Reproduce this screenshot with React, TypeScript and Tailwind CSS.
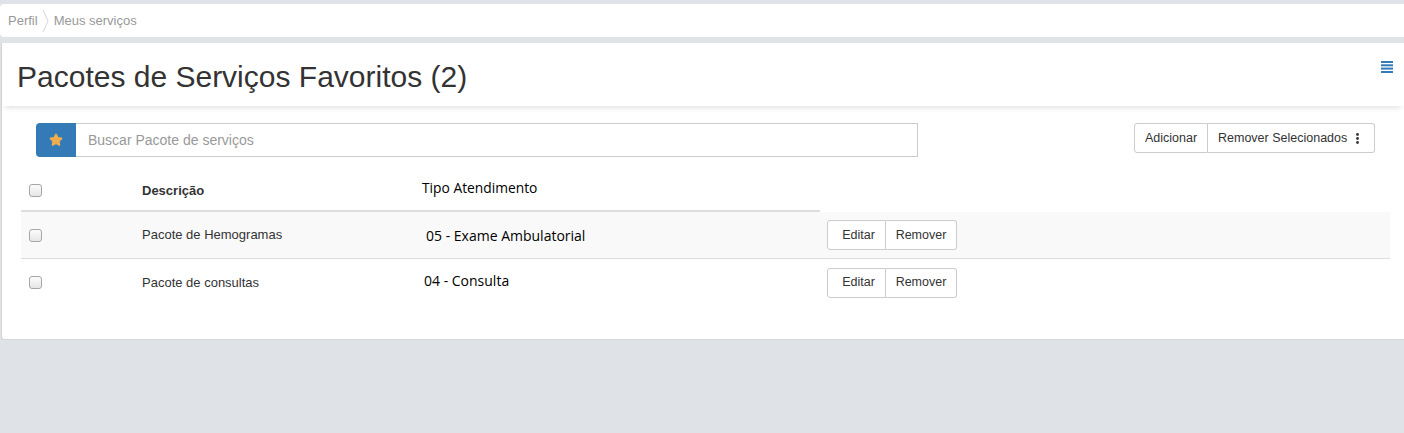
import { Star } from 'lucide-react';

const rows = [
  { id: 1, desc: 'Pacote de Hemogramas', tipo: '05 - Exame Ambulatorial', striped: true, tipoOffset: 'pl-[4px]' },
  { id: 2, desc: 'Pacote de consultas', tipo: '04 - Consulta', striped: false, tipoOffset: 'pl-[2px] -mt-[4px]' },
];

const Checkbox = () => (
  <span className="inline-block w-[13px] h-[13px] rounded-[3px] border border-[#a6a6a6] bg-gradient-to-b from-[#fcfcfc] to-[#e6e6e6]" />
);

const App = () => {
  return (
    <div className="w-[1404px] h-[433px] bg-[#dfe3e7] font-['Liberation_Sans',Arial,sans-serif] text-[#333] overflow-hidden">
      <div className="pt-[4px]">
        {/* breadcrumb */}
        <div className="h-[33px] bg-white rounded-l-[4px] flex items-center pl-[8px] text-[13px] text-[#999]">
          <span>Perfil</span>
          <svg width="10" height="24" viewBox="0 0 10 24" className="mx-[3px]">
            <path d="M2 1 L7 12 L2 23" fill="none" stroke="#d6d6d6" strokeWidth="1" />
          </svg>
          <span>Meus serviços</span>
        </div>

        {/* main panel */}
        <div className="mt-[6px] ml-[1px] h-[297px] bg-white border-l border-b border-[#d2d6da] rounded-bl-[3px]">
          <div className="h-[63px] flex items-start justify-between shadow-[0_4px_6px_-3px_rgba(0,0,0,0.15)] relative">
            <h1 className="text-[30px] leading-none pl-[15px] pt-[19px] text-[#333]">Pacotes de Serviços Favoritos (2)</h1>
            <svg width="12" height="12" viewBox="0 0 12 12" className="mt-[18px] mr-[11px]">
              <rect x="0" y="0" width="12" height="2" fill="#337ab7" />
              <rect x="0" y="3.3" width="12" height="2" fill="#337ab7" />
              <rect x="0" y="6.6" width="12" height="2" fill="#337ab7" />
              <rect x="0" y="10" width="12" height="2" fill="#337ab7" />
            </svg>
          </div>

          <div className="flex justify-between pt-[17px] pl-[34px] pr-[29px]">
            <div className="flex w-[882px] h-[34px]">
              <div className="w-[40px] bg-[#337ab7] rounded-l-[4px] flex items-center justify-center">
                <Star size={14} fill="#f0ad4e" stroke="#f0ad4e" />
              </div>
              <div className="flex-1 border border-l-0 border-[#ccc] flex items-center pl-[12px] text-[14px] text-[#999]">
                Buscar Pacote de serviços
              </div>
            </div>
            <div className="flex h-[30px] text-[12.5px] text-[#333]">
              <button className="w-[74px] border border-[#ccc] rounded-l-[3px] bg-white">Adicionar</button>
              <button className="w-[167px] pl-[10px] border border-l-0 border-[#ccc] rounded-r-[3px] bg-white flex items-center gap-[9px]">
                Remover Selecionados
                <svg width="3" height="11" viewBox="0 0 3 11">
                  <circle cx="1.5" cy="1.5" r="1.4" fill="#333" />
                  <circle cx="1.5" cy="5.5" r="1.4" fill="#333" />
                  <circle cx="1.5" cy="9.5" r="1.4" fill="#333" />
                </svg>
              </button>
            </div>
          </div>

          <div className="ml-[19px] w-[1369px] mt-[13px]">
            <div className="flex h-[40px] items-center relative">
              <div className="w-[121px] pl-[8px] flex items-center pt-[1px]"><Checkbox /></div>
              <div className="w-[280px] text-[13px] font-bold pt-[2px]">Descrição</div>
              <div className="text-[13.8px] text-black font-['Open_Sans',sans-serif] -mt-[3px]">Tipo Atendimento</div>
              <div className="absolute left-0 bottom-[-2px] w-[799px] h-[2px] bg-[#ddd]" />
            </div>
            <div className="h-[2px]" />
            {rows.map((r, i) => (
              <div key={r.id} className={`flex h-[47px] items-center ${i < rows.length - 1 ? 'border-b border-[#ddd]' : ''} ${r.striped ? 'bg-[#f9f9f9]' : 'bg-white'}`}>
                <div className="w-[121px] pl-[8px] flex items-center"><Checkbox /></div>
                <div className="w-[280px] text-[13px] text-[#333]">{r.desc}</div>
                <div className={`w-[405px] text-[14px] text-black font-['Open_Sans',sans-serif] ${r.tipoOffset}`}>{r.tipo}</div>
                <div className="flex h-[30px] text-[12.5px] text-[#333]">
                  <button className="w-[59px] pl-[4px] border border-[#ccc] rounded-l-[3px] bg-white">Editar</button>
                  <button className="w-[71px] border border-l-0 border-[#ccc] rounded-r-[3px] bg-white">Remover</button>
                </div>
              </div>
            ))}
          </div>
        </div>
      </div>
    </div>
  );
};

export default App;
